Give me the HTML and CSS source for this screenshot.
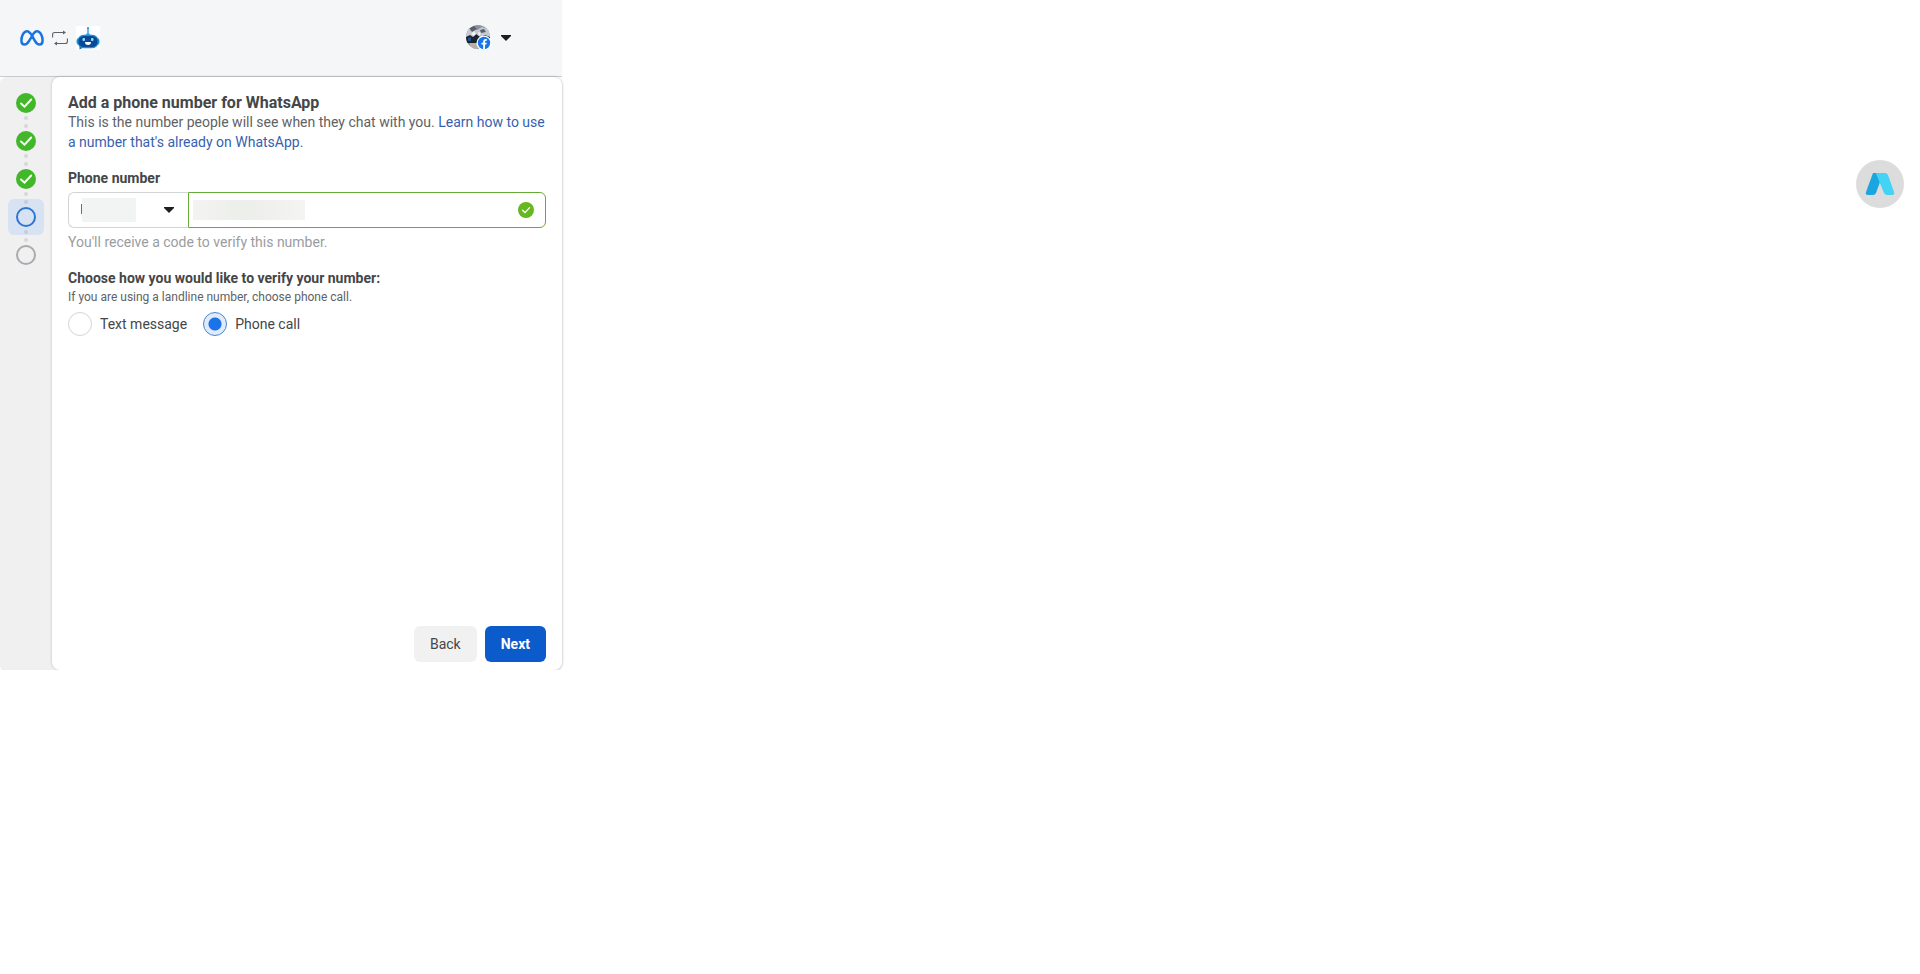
FILE: index.html
```html
<!DOCTYPE html>
<html lang="en">
<head>
<meta charset="utf-8">
<title>Add a phone number for WhatsApp</title>
<link rel="stylesheet" href="styles.css">
</head>
<body>
<div class="dialog">
  <header class="topbar">
    <div class="brands">
      <svg class="meta" viewBox="0 0 24 16" role="img" aria-label="Meta"><path d="M12 5.500C10 2.500 8.800 1.300 7 1.300C3.800 1.300 1.400 6 1.400 10.300C1.400 13 2.500 14.600 4.600 14.600C7 14.600 8.500 12.500 12 6C14 2.500 15.200 1.300 17 1.300C20.200 1.300 22.600 6 22.600 10.300C22.600 13 21.500 14.600 19.400 14.600C17 14.600 15.500 12.500 12 5.500" fill="none" stroke="#1a73e0" stroke-width="2.500" stroke-linejoin="round"/></svg>
      <svg class="swap" viewBox="0 0 16 16" aria-hidden="true"><path d="M.6 7.500V4.500Q.6 2.500 2.600 2.500H13M15.400 8.500v3q0 2-2 2H3" fill="none" stroke="#5d6166" stroke-width="1.100"/><path d="M11 .5l3 2-3 2zM5 11.500l-3 2 3 2z" fill="#5d6166"/></svg>
      <svg class="bot" viewBox="0 0 24 24" role="img" aria-label="Chat bot"><path fill="#fff" d="M0 0h24v24H0z"/><path d="M12 2v7" stroke="#2fa8e0" stroke-width="1.500"/><circle cx="12" cy="2" r="1" fill="#2a8fd0"/><path d="M9 10q1-3 3-3t3 3z" fill="#2fb5ec"/><rect x="0.500" y="12" width="23" height="7" rx="3" fill="#1c9ad8"/><path d="M3.500 18v5.500l5-2.500z" fill="#1668b0"/><rect x="1.800" y="9.300" width="20.400" height="12.400" rx="6" fill="#0d4a94" stroke="#1e90d6" stroke-width="1.200"/><rect x="6.500" y="12" width="2.500" height="3" rx="1" fill="#8be1ff"/><rect x="15" y="12" width="2.500" height="3" rx="1" fill="#8be1ff"/><path d="M9 16h6q0 3-3 3t-3-3z" fill="#fff"/></svg>
    </div>
    <button class="account" type="button" aria-label="Account menu">
      <svg class="avatar" viewBox="0 0 26 26" aria-hidden="true"><defs><clipPath id="face"><circle cx="12" cy="12" r="12"/></clipPath></defs><g clip-path="url(#face)"><path fill="#8d9198" d="M0 0h24v24H0z"/><path d="M0 5l6-3 5 3 5-3 8 3v7H0z" fill="#c3cad3"/><path d="M3 3l5-2 3 3-5 3zM14 5l4-1 2 3-5 1z" fill="#59606a"/><path d="M0 12l4-2 3 2 3-3 4 3 5-2 5 2v6H0z" fill="#1c222e"/><path d="M2 13l3-1v4H2z" fill="#244f8d"/><path d="M8 6l2 3-2 2-3-2zM12 7l3 1-2 3z" fill="#f0f2f4"/><path d="M4 18h8v6H4z" fill="#b9b0a5"/></g><circle cx="18" cy="18" r="7.500" fill="#fff"/><circle cx="18" cy="18" r="6.200" fill="#1675ea"/><path d="M17.200 24v-4.500h-1.700v-1.800h1.700v-1.200q0-2.500 2.500-2.500h1.100v1.700h-.8q-1 0-1 1v1h1.700l-.3 1.800H19V24z" fill="#fff"/></svg>
      <svg class="caret" viewBox="0 0 12 8" aria-hidden="true"><path d="M1 1h10v1L6 7 1 2z" fill="#1c1e21"/></svg>
    </button>
  </header>
  <div class="body">
    <ol class="steps" aria-label="Progress">
      <li class="step"><svg viewBox="0 0 20 20" role="img" aria-label="Completed"><circle cx="10" cy="10" r="10" fill="#42b72a"/><path d="M5 10.500l3.500 3.200L15.200 6.500" fill="none" stroke="#fff" stroke-width="2" stroke-linecap="round"/></svg></li>
      <li class="dots" aria-hidden="true"><i></i><i></i></li>
      <li class="step"><svg viewBox="0 0 20 20" role="img" aria-label="Completed"><circle cx="10" cy="10" r="10" fill="#42b72a"/><path d="M5 10.500l3.500 3.200L15.200 6.500" fill="none" stroke="#fff" stroke-width="2" stroke-linecap="round"/></svg></li>
      <li class="dots" aria-hidden="true"><i></i><i></i></li>
      <li class="step"><svg viewBox="0 0 20 20" role="img" aria-label="Completed"><circle cx="10" cy="10" r="10" fill="#42b72a"/><path d="M5 10.500l3.500 3.200L15.200 6.500" fill="none" stroke="#fff" stroke-width="2" stroke-linecap="round"/></svg></li>
      <li class="dots" aria-hidden="true"><i></i><i></i></li>
      <li class="step current" aria-current="step"><svg viewBox="0 0 20 20" role="img" aria-label="Current"><circle cx="10" cy="10" r="9" fill="none" stroke="#2c75d4" stroke-width="2"/></svg></li>
      <li class="dots" aria-hidden="true"><i></i><i></i></li>
      <li class="step"><svg viewBox="0 0 20 20" role="img" aria-label="Not started"><circle cx="10" cy="10" r="9" fill="none" stroke="#a7abae" stroke-width="2"/></svg></li>
    </ol>
    <form class="card">
      <h1 class="title">Add a phone number for WhatsApp</h1>
      <p class="intro">This is the number people will see when they chat with you. <a class="link" href="#">Learn how to use a number that's already on WhatsApp.</a></p>
      <label class="heading" for="phone">Phone number</label>
      <div class="phone">
        <div class="country">
          <select class="country-select" aria-label="Country code"><option></option></select>
          <span class="mask mask-country"></span>
          <svg class="caret country-caret" viewBox="0 0 12 8" aria-hidden="true"><path d="M1 1h10v1L6 7 1 2z" fill="#1c1e21"/></svg>
        </div>
        <div class="number">
          <input class="number-input" id="phone" type="tel">
          <span class="mask mask-number"></span>
          <svg class="valid" viewBox="0 0 16 16" aria-hidden="true"><circle cx="8" cy="8" r="8" fill="#65b81f"/><path d="M4.500 8.300l2.500 2.300 4.600-5" fill="none" stroke="#fff" stroke-width="1.300" stroke-linecap="round"/></svg>
        </div>
      </div>
      <p class="hint">You'll receive a code to verify this number.</p>
      <fieldset class="verify">
        <legend class="heading">Choose how you would like to verify your number:</legend>
        <p class="note">If you are using a landline number, choose phone call.</p>
        <div class="options">
          <label class="option"><input class="radio" type="radio" name="method">Text message</label>
          <label class="option"><input class="radio" type="radio" name="method" checked>Phone call</label>
        </div>
      </fieldset>
      <div class="actions">
        <button class="button" type="button">Back</button>
        <button class="button primary" type="submit">Next</button>
      </div>
    </form>
  </div>
</div>
<button class="assistant" type="button" aria-label="Open assistant">
  <svg viewBox="0 0 30 26" aria-hidden="true"><path d="M8 2h7v9l-4 11q-1 2-3 2H3q-3 0-2-3z" fill="#1ba6df"/><path d="M11 2h9q2 0 3 2l6 17q1 3-2 3h-5q-2 0-3-2L12 5q-1-2-1-3z" fill="#42d3f5"/></svg>
</button>
</body>
</html>
```
FILE: styles.css
```css
* { box-sizing: border-box; }

body {
  margin: 0;
  background: #fff;
  color: #444648;
  font: 14px/20px Roboto, "Liberation Sans", sans-serif;
}

p, h1, ol { margin: 0; padding: 0; }
button { border: 0; padding: 0; font: inherit; color: inherit; cursor: pointer; }
svg { display: block; }

.dialog { max-width: 562px; }

.topbar {
  display: flex;
  align-items: center;
  justify-content: space-between;
  height: 77px;
  padding: 0 50px 0 20px;
  background: #f4f6f8;
  border-bottom: 1px solid #cbced1;
}
.brands { display: flex; align-items: center; gap: 8px; }
.meta { width: 24px; height: 16px; }
.swap { width: 16px; height: 16px; }
.bot { width: 24px; height: 24px; }
.account { display: flex; align-items: center; gap: 8px; background: none; }
.avatar { width: 26px; height: 26px; }
.caret { width: 12px; height: 8px; }

.body {
  display: flex;
  min-height: 593px;
  background: #f0f0f1;
  border-radius: 8px;
  box-shadow: 0 1px 3px #0002;
}

.steps {
  display: flex;
  flex-direction: column;
  align-items: center;
  width: 52px;
  padding-top: 16px;
  list-style: none;
}
.step svg { width: 20px; height: 20px; }
.current {
  margin: -8px 0;
  padding: 8px;
  border-radius: 6px;
  background: #d7e3f2;
}
.dots {
  display: flex;
  flex-direction: column;
  align-items: center;
  justify-content: center;
  gap: 4px;
  height: 18px;
  z-index: 1;
}
.dots i { width: 4px; height: 4px; border-radius: 50%; background: #7773; }

.card {
  display: flex;
  flex: 1;
  flex-direction: column;
  padding: 16px 16px 8px;
  background: #fff;
  border-radius: 8px;
  box-shadow: 0 0 3px #0003;
}
.title { font-size: 16px; line-height: 19px; font-weight: 700; }
.intro { color: #606265; }
.link { color: #385faf; text-decoration: none; }
.heading { padding: 0; font-weight: 700; }
label.heading { margin-top: 16px; }

.phone { display: flex; margin-top: 4px; }
.country { position: relative; width: 120px; }
.country-select, .number-input {
  display: block;
  width: 100%;
  height: 36px;
  padding: 0 12px;
  border: 1px solid #d2d5d8;
  background: #fff;
  font: inherit;
  appearance: none;
}
.country-select { border-right: 0; border-radius: 6px 0 0 6px; }
.number { position: relative; flex: 1; }
.number-input { border-color: #67ac36; border-radius: 0 6px 6px 0; }
.mask { position: absolute; pointer-events: none; }
.mask-country { top: 6px; left: 14px; width: 54px; height: 24px; background: #f2f3f3; }
.mask-country::before {
  content: "";
  position: absolute;
  top: 6px;
  left: -1px;
  width: 1px;
  height: 10px;
  background: #77704a;
}
.mask-number { top: 8px; left: 5px; width: 112px; height: 20px; background: linear-gradient(90deg, #f3f4f2, #eceeea 45%, #f4f4f3); }
.country-caret { position: absolute; right: 13px; top: 14px; }
.valid { position: absolute; right: 12px; top: 10px; width: 16px; height: 16px; }
.hint { margin-top: 4px; color: #999da1; }

.verify { margin: 16px 0 0; padding: 0; border: 0; }
.note { color: #606265; font-size: 12px; line-height: 18px; }
.options { display: flex; gap: 16px; margin-top: 6px; }
.option { display: flex; align-items: center; gap: 8px; }
.radio {
  width: 24px;
  height: 24px;
  margin: 0;
  border: 1px solid #d2d5d8;
  border-radius: 50%;
  background: #fff;
  appearance: none;
}
.radio:checked {
  border-color: #4a84d0;
  background: radial-gradient(circle, #1a73e8 6px, #dfebfb 7px);
}

.actions { display: flex; justify-content: flex-end; gap: 8px; margin-top: auto; }
.button { height: 36px; padding: 0 16px; border-radius: 6px; background: #f1f1f2; }
.primary { background: #0b5bcb; color: #fff; font-weight: 700; }

.assistant {
  position: fixed;
  top: 160px;
  right: 16px;
  display: grid;
  place-items: center;
  width: 48px;
  height: 48px;
  border-radius: 50%;
  background: #dcdcdc;
}
.assistant svg { width: 30px; height: 26px; }
```
